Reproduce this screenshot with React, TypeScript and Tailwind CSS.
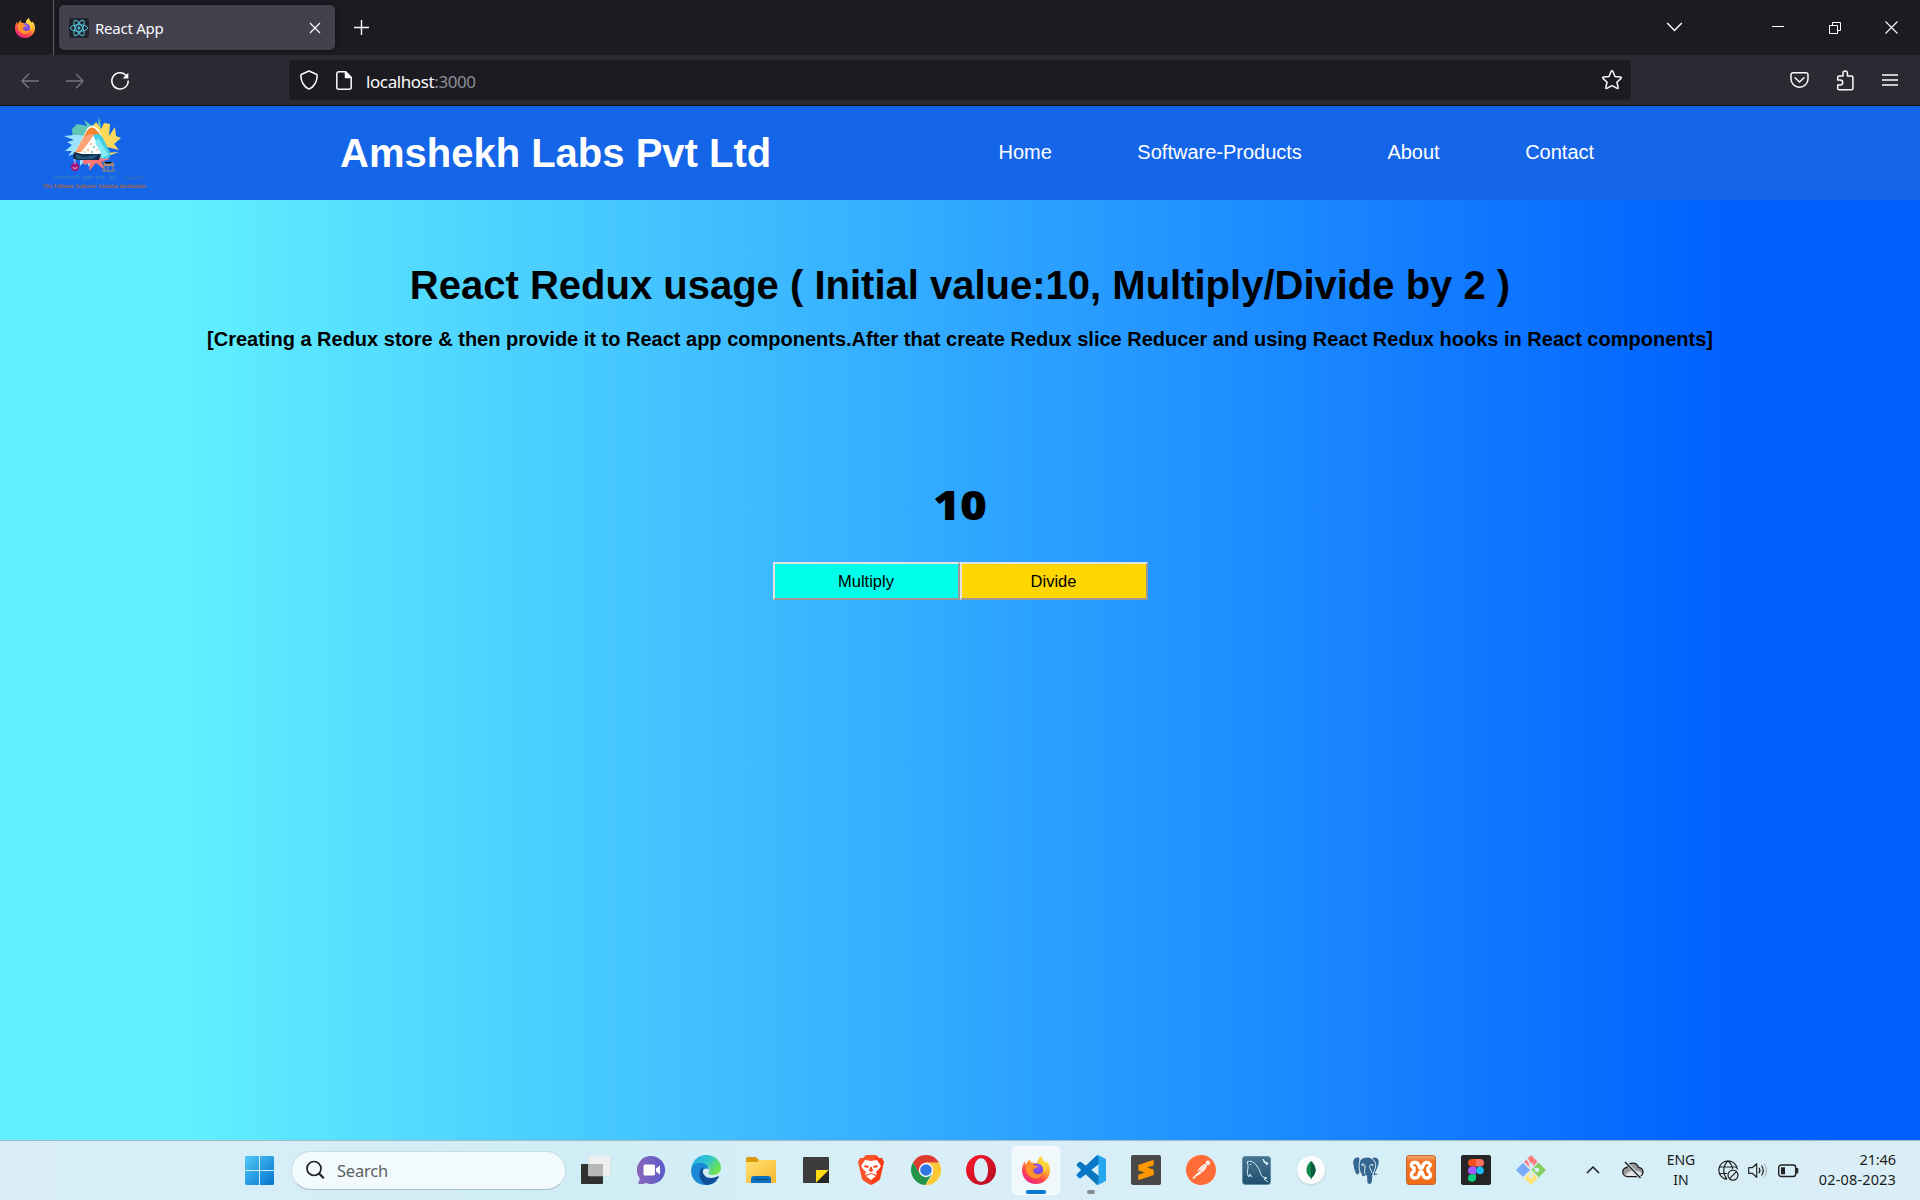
import React from "react";
import { SiPostman, SiSublimetext } from "react-icons/si";

function Firefox({ size }: { size: number }) {
  const id = "ff" + size;
  return (
    <svg width={size} height={size} viewBox="0 0 28 28" className="shrink-0">
      <defs>
        <linearGradient id={id} x1="0.8" y1="0.05" x2="0.2" y2="1">
          <stop offset="0" stopColor="#fff44f" />
          <stop offset=".35" stopColor="#ffa72e" />
          <stop offset=".65" stopColor="#ff4a4b" />
          <stop offset="1" stopColor="#e81f86" />
        </linearGradient>
        <radialGradient id={id + "p"} cx=".6" cy=".3" r=".8">
          <stop offset="0" stopColor="#9059ff" />
          <stop offset="1" stopColor="#5b3ac7" />
        </radialGradient>
      </defs>
      <path d="M3 5c0 2 .2 3 1 4 .8-3 2-4.500 4.200-6-.2 2 .3 3 1.300 3.600 2 0 3.500.2 5.500 1C15 4 16.500 2 19.500 0c.2 3 2 4.500 4 6.500C25 5.800 25 5 25 5c2.500 4 3 7 3 9.500C28 22 22 28 14 28S0 22 0 14.500C0 10.500 1 8 3 5z" fill={`url(#${id})`} />
      <circle cx="14.500" cy="14" r="6.600" fill={`url(#${id}p)`} />
      <path d="M3.500 10.500C6 8 9.500 8 12 9c2 .8 3.800.7 3.800 1.600 0 1.400-3.300 1.200-4.300 3-.8 2 .5 4 3.500 4.600 3 .4 5-1.500 6-2.700-.5 4.500-4 7.500-8 7-5-.6-9-4-9.500-12z" fill="#ff9228" />
      <path d="M17 7.500c3.500 1 5.500 4.500 4.600 9.500 2.500-2 3.300-5.500 1.400-9.500C21 4.500 20 3 19.500 0 16.500 2 15.500 5 17 7.500z" fill="#ffd53d" />
    </svg>
  );
}

function ReactLogo() {
  return (
    <svg width="20" height="20" viewBox="0 0 20 20" className="shrink-0" fill="none" stroke="#58c4dc" strokeWidth="1">
      <rect width="20" height="20" rx="2" fill="#20232a" stroke="none" />
      <ellipse cx="10" cy="10" rx="8.600" ry="3.300" />
      <ellipse cx="10" cy="10" rx="8.600" ry="3.300" transform="rotate(60 10 10)" />
      <ellipse cx="10" cy="10" rx="8.600" ry="3.300" transform="rotate(120 10 10)" />
      <circle cx="10" cy="10" r="1.500" fill="#58c4dc" stroke="none" />
    </svg>
  );
}

function TabStrip() {
  return (
    <div className="flex h-[55px] shrink-0 items-center bg-[#1c1b22]">
      <div className="flex h-full w-[54px] items-center border-r border-[#5b5b66] pl-[15px]">
        <Firefox size={20} />
      </div>
      <div className="ml-[5px] flex h-[45px] w-[276px] items-center rounded-[5px] bg-[#42414d] pl-[10px] pr-[14px] shadow-[0_0_4px_rgba(0,0,0,0.5)]">
        <ReactLogo />
        <span className="ml-[6px] flex-1 pt-[2px] font-['Noto_Sans',sans-serif] text-[15px] tracking-[-0.25px] text-[#fbfbfe]">React App</span>
        <svg width="12" height="12" viewBox="0 0 12 12" stroke="#fbfbfe" strokeWidth="1.200"><path d="M1 1l10 10M11 1L1 11" /></svg>
      </div>
      <svg className="ml-[19px]" width="15" height="15" viewBox="0 0 15 15" stroke="#fbfbfe" strokeWidth="1.400"><path d="M7.500 0v15M0 7.500h15" /></svg>
      <div className="ml-auto flex items-center">
        <svg className="mr-[89px] mt-[-1px]" width="17" height="10" viewBox="0 0 17 10" fill="none" stroke="#fbfbfe" strokeWidth="1.500"><path d="M1.200 1l7.300 7.500L15.800 1" /></svg>
        <svg className="mr-[45px] mt-[-1px]" width="12" height="12" viewBox="0 0 12 12"><path d="M0 5h12v1H0z" fill="#fff" /></svg>
        <svg className="mr-[44px]" width="12" height="12" viewBox="0 0 12 12" fill="none" stroke="#fff"><path d="M.5 3.500h8v8h-8zM3.500 3.500v-3h8v8h-3" /></svg>
        <svg className="mr-[22px]" width="13" height="13" viewBox="0 0 13 13" stroke="#fff" strokeWidth="1.100"><path d="M.5.5l12 12M12.500.5l-12 12" /></svg>
      </div>
    </div>
  );
}

function Toolbar() {
  return (
    <div className="flex h-[51px] shrink-0 items-center border-b border-[#0c0c0d] bg-[#2b2a33]">
      <svg className="ml-[21px] mt-px" width="18" height="16" viewBox="0 0 18 16" fill="none" stroke="#77767f" strokeWidth="1.300"><path d="M18 8H1M8 .8L.9 8 8 15.200" /></svg>
      <svg className="ml-[27px] mt-px" width="18" height="16" viewBox="0 0 18 16" fill="none" stroke="#77767f" strokeWidth="1.300"><path d="M0 8h17M10 .8L17.100 8 10 15.200" /></svg>
      <svg className="ml-[26px] mt-[2px]" width="20" height="20" viewBox="0 0 20 20" fill="none" stroke="#fbfbfe" strokeWidth="1.500"><path d="M16.400 4.700A8.200 8.200 0 1 0 18.200 9.500" /><path d="M18.300 1.700v5.700h-5.700z" fill="#fbfbfe" stroke="none" /></svg>
      <div className="ml-[159px] flex h-10 w-[1342px] items-center rounded-[5px] bg-[#1c1b22] pl-[11px] pr-[8px]">
        <svg width="18" height="20" viewBox="0 0 18 20" fill="none" stroke="#fbfbfe" strokeWidth="1.500" strokeLinejoin="round"><path d="M9 1l7.300 3.200q.9.400.9 1.400C17 11.500 14.500 16.500 9 19.100 3.500 16.500 1 11.500.8 5.600q0-1 .9-1.400z" /></svg>
        <svg className="ml-[18px]" width="16" height="19" viewBox="0 0 16 19" fill="none" stroke="#fbfbfe" strokeWidth="1.500" strokeLinejoin="round"><path d="M2.800.8h6.700l5.700 5.700v9.700a2 2 0 0 1-2 2H2.800a2 2 0 0 1-2-2V2.800a2 2 0 0 1 2-2z" /><path d="M9.500.8v5.700h5.700z" fill="#fbfbfe" /></svg>
        <span className="ml-[14px] flex-1 pt-[3px] font-['Noto_Sans',sans-serif] text-[17px] tracking-[-0.4px] text-[#fbfbfe]">localhost<span className="text-[#8f8e96]">:3000</span></span>
        <svg width="22" height="22" viewBox="0 0 22 22" fill="none" stroke="#fbfbfe" strokeWidth="1.500" strokeLinejoin="round"><path d="M10 2.700q1-2 2 0l2 4.800 5.200.5q1.900.2.600 1.600l-3.900 3.600 1.200 5q.4 1.900-1.400 1L11 16.700 6.300 19.200q-1.800.9-1.400-1l1.200-5L2.200 9.600Q.9 8.200 2.800 8L8 7.500z" /></svg>
      </div>
      <div className="ml-auto mr-[22px] flex items-center">
        <svg width="19" height="16" viewBox="0 0 19 16" fill="none" stroke="#fbfbfe" strokeWidth="1.500" strokeLinecap="round" strokeLinejoin="round"><path d="M3 .8h13a2 2 0 0 1 2 2V7A8.500 8.200 0 0 1 1 7V2.800a2 2 0 0 1 2-2z" /><path d="M5 5.800L9.500 10 14 5.800" /></svg>
        <svg className="ml-[27px]" width="18" height="21" viewBox="0 0 18 21" fill="none" stroke="#fbfbfe" strokeWidth="1.500" strokeLinejoin="round"><path d="M1.700 10V7.500q0-1.500 1.500-1.500H7V3.200a2.200 2.200 0 0 1 4.400 0V6h4q1.500 0 1.500 1.500v11q0 1.300-1.500 1.300H3.200q-1.500 0-1.500-1.300V15h2.500a2.500 2.500 0 0 0 0-5z" /></svg>
        <svg className="ml-[28px]" width="16" height="14" viewBox="0 0 16 14" stroke="#fbfbfe" strokeWidth="1.300"><path d="M0 2h16M0 7h16M0 12h16" /></svg>
      </div>
    </div>
  );
}

function BrandLogo() {
  return (
    <svg className="ml-[34px] shrink-0 overflow-visible" width="121" height="82" viewBox="-8 -3 121 82">
      <g transform="translate(0 3)">
        <path d="M31 22l-1-11 5-5 10 2-3-6 7 5 7-1 1-7 2 9-3 10-18 9z" fill="#62c6b4" />
        <path d="M48 12l6-8 5 7 3-6 6 1-1 12 6-9 1 9 5 2-7 6 5 6-16-4-10-12z" fill="#ffd95a" />
        <path d="M38 17l-6 0-10 1 10 4-7 2 5 3-7 6 7 0-4 5 9-3-4 8 7-5 0 10 6-6 3 7 4-10 1-18z" fill="#9de3fa" />
        <path d="M40 40l2 7 6-2-1 8 7-8 10 8-5-9 9-3-10-6-18-1z" fill="#ff7474" />
        <path d="M64 35l13-1-8 3z" fill="#ffd95a" />
        <path d="M50 8q6 0 9 9L68 39H32l1-4 11-22q2-5 6-5z" fill="#fff" />
        <path d="M45 13q5-8 12 2l2 3-8-1-9 16-9 2z" fill="#fa822c" />
        <path d="M51 18L42 32l-8 2 6-12q4-6 11-6z" fill="#ffa477" />
        <path d="M52 17q5-3 9 3l7 14q2 6-5 7l-5-1q1-8-7-23z" fill="#42cde0" />
        <path d="M56 20l11 17-7 3-7-16z" fill="#84e8f5" />
        <path d="M50 20l9 15-21 1z" fill="#fff" />
        <g fill="#ff965e"><circle cx="49" cy="26" r=".9" /><circle cx="46" cy="32" r="1" /><circle cx="55" cy="32" r=".8" /></g>
        <g fill="#59bea8"><circle cx="52" cy="29" r=".9" /><circle cx="50" cy="34" r=".9" /><circle cx="43" cy="34" r=".8" /></g>
        <path d="M32 34l8 2h19l-2 6H35q-6 0-3-8z" fill="#102c4e" />
        <path d="M33 36l9 3 15-3-6 5H35z" fill="#225978" />
        <circle cx="33" cy="49" r="4.200" fill="#a3157d" />
        <path d="M31 49q2 3 4 0M33 41v5" stroke="#d5b1db" strokeWidth="1.200" fill="none" />
        <path d="M62 44v9m4-8v8m5-8v8M60 44l6 3 6-3M60 53h13" stroke="#817f82" strokeWidth="1.300" />
        <path d="M62 47h10" stroke="#f29b61" strokeWidth="1.200" />
      </g>
      <text x="12" y="64" fontSize="7" fill="#4486b4" fontFamily="Liberation Serif" fontStyle="italic" textLength="62" lengthAdjust="spacingAndGlyphs">Amshekh labs pvt. ltd</text>
      <text x="76" y="60" fontSize="3.500" fill="#765f73" fontFamily="Liberation Sans">™</text>
      <text x="82" y="64" fontSize="3.500" fill="#586f96" fontFamily="Liberation Sans" textLength="20" lengthAdjust="spacingAndGlyphs">©copyright 2023</text>
      <text x="1" y="73" fontSize="7" fill="#a9643f" fontFamily="Liberation Serif" fontStyle="italic" fontWeight="bold" textLength="103" lengthAdjust="spacingAndGlyphs">The Ultimate Software Solution destination</text>
    </svg>
  );
}

function SiteHeader() {
  return (
    <header className="flex h-[94px] shrink-0 items-center bg-[#1565e8] font-['Liberation_Sans',sans-serif] text-white">
      <BrandLogo />
      <h1 className="ml-[185px] w-[432px] whitespace-nowrap text-[40px] font-bold leading-none">Amshekh Labs Pvt Ltd</h1>
      <nav className="-mt-[2px] ml-[226.500px] flex gap-[85.500px] text-[20px] leading-none">
        <span>Home</span>
        <span>Software-Products</span>
        <span>About</span>
        <span>Contact</span>
      </nav>
    </header>
  );
}

function Counter() {
  return (
    <main className="flex flex-1 flex-col items-center bg-[linear-gradient(90deg,#60efff_10%,#0061ff_90%)] pt-[62px] font-['Liberation_Sans',sans-serif] text-black">
      <h1 className="whitespace-nowrap text-[40px] font-bold leading-[46px]">React Redux usage ( Initial value:10, Multiply/Divide by 2 )</h1>
      <h2 className="mt-[19px] whitespace-nowrap text-[20px] font-bold leading-[24px]">[Creating a Redux store &amp; then provide it to React app components.After that create Redux slice Reducer and using React Redux hooks in React components]</h2>
      <div className="mt-[129px] scale-x-[1.12] font-['Open_Sans',sans-serif] text-[41px] font-extrabold leading-[48px]">10</div>
      <div className="mt-[34px] flex">
        <button className="h-[38px] w-[187px] border-2 border-b-[#999] border-l-[#e3e3e3] border-r-[#999] border-t-[#e3e3e3] bg-[#00ffe8] pt-px text-[16.500px]">Multiply</button>
        <button className="h-[38px] w-[188px] border-2 border-b-[#999] border-l-[#e3e3e3] border-r-[#999] border-t-[#e3e3e3] bg-[#ffd700] pt-px text-[16.500px]">Divide</button>
      </div>
    </main>
  );
}

function Slot({ children, active, dot }: { children: React.ReactNode; active?: boolean; dot?: boolean }) {
  return (
    <div className={active ? "relative flex h-[49px] w-12 items-center justify-center rounded-[5px] border border-white/80 bg-[#f0f8fc]" : "relative flex h-[49px] w-12 items-center justify-center"}>
      {children}
      {active && <span className="absolute bottom-0 h-1 w-5 rounded-full bg-[#0078d4]" />}
      {dot && <span className="absolute bottom-[1px] h-1 w-2 rounded-full bg-[#858b8f]" />}
    </div>
  );
}

function TaskApps() {
  return (
    <div className="-mt-px ml-[6px] flex gap-[7px]">
      <Slot>
        <svg width="30" height="28" viewBox="0 0 30 28"><rect y="8" width="22" height="20" rx="1" fill="#30302f" /><rect x="7.500" width="22" height="20" rx="1" fill="#efefef" stroke="#d3d6d9" strokeWidth=".5" /><path d="M7.500 8H22v12H7.500z" fill="#b7b7b7" /></svg>
      </Slot>
      <Slot>
        <svg width="29" height="28" viewBox="0 0 29 28"><defs><linearGradient id="chat" x1="0" x2="1"><stop stopColor="#8b66ba" /><stop offset="1" stopColor="#5a5ccb" /></linearGradient></defs><path d="M15 0a14 14 0 1 1-6 27q-3 1.500-8 .8 1.500-2 1.700-5.500A14 14 0 0 1 15 0z" fill="url(#chat)" /><rect x="6.500" y="8.500" width="11.500" height="11" rx="1.500" fill="#fff" /><path d="M19 12.500l4-3v9l-4-3z" fill="#fff" /></svg>
      </Slot>
      <Slot>
        <svg width="30" height="30" viewBox="0 0 30 30"><defs><linearGradient id="edg" x1="0" x2="1" y2=".5"><stop stopColor="#28a9e8" /><stop offset=".55" stopColor="#2fc6d1" /><stop offset="1" stopColor="#70e250" /></linearGradient></defs><path d="M.5 12C2 4.500 8 0 15 0c9 0 15 6 15 12.800 0 4.500-3.500 7.200-8 7.200-4 0-5.500-1.500-4.200-3 2-2.500.6-6-4.300-6C8 11 4 15 4 19z" fill="url(#edg)" /><path d="M0 15C1 10 5 7.500 10 8c5 .4 8 4 8 7-1.500-2.500-6-2-6.500 2.500C11 25 20 29 27 25c-3 3-7 5-12 5C6 30 0 24 0 15z" fill="#1a88d5" /><path d="M8.500 18.500q-.3-5 4-6.300C10 18 14 23 20 23q3.500 0 7-1.800c1-.3 1.200.5.6 1.400C25 27 20 30 15.500 30 11 28.500 8.500 24 8.500 18.500z" fill="#104f98" /></svg>
      </Slot>
      <Slot>
        <svg width="30" height="27" viewBox="0 0 30 27"><defs><linearGradient id="fold" y2="1" x2="1"><stop stopColor="#ffdf72" /><stop offset="1" stopColor="#f8b92c" /></linearGradient></defs><path d="M0 2q0-2 2-2h8l3 3h15q2 0 2 2v5H0z" fill="#d99a0c" /><path d="M0 5h11l2-2h17v23H0z" fill="url(#fold)" /><path d="M5 26v-4q0-3 3-3h14q3 0 3 3v4z" fill="#0b70bd" /><path d="M9 22.500h12" stroke="#0a4c86" strokeWidth="1.200" /></svg>
      </Slot>
      <Slot>
        <svg width="26" height="26" viewBox="0 0 26 26"><rect width="26" height="26" rx="1" fill="#3c3c3c" /><path d="M13 13h13L13 26z" fill="#ffdc12" /><path d="M26 13v13H13z" fill="#242424" /></svg>
      </Slot>
      <Slot>
        <svg width="26" height="30" viewBox="0 0 26 30"><path d="M8 0h10l3 3 3 0 2 4-1 4-3 13q-1 2-9 6-8-4-9-6L1 11 0 7l2-4h3z" fill="#fb542b" /><path d="M18 0l3 3h3l2 4-1 4-3 13q-1 2-9 6z" fill="#ff2b08" opacity=".6" /><path d="M7 5l6 1 6-1 4 6-2 3-3 3 1 3-6-2-6 2 1-3-3-3-2-3z M8 21l5-2 5 2-5 4z" fill="#fff" /><path d="M7 10l4 1-1 2-4-1zM19 10l-4 1 1 2 4-1zM12 12h2l1 4-2 1-2-1z" fill="#fb4a24" /></svg>
      </Slot>
      <Slot>
        <svg width="30" height="30" viewBox="0 0 30 30"><path d="M15 15l7 4-8 11A15 15 0 0 0 28 7.500H15z" fill="#fcc934" /><path d="M2 7.500a15 15 0 0 1 26 0H15L8.500 19z" fill="#df3c30" /><path d="M2 7.500A15 15 0 0 0 14 30l7-11-12 0z" fill="#23954b" /><circle cx="15" cy="15" r="7.200" fill="#fff" /><circle cx="15" cy="15" r="5.800" fill="#3178e6" /></svg>
      </Slot>
      <Slot>
        <svg width="30" height="30" viewBox="0 0 30 30"><defs><linearGradient id="op" y2="1"><stop stopColor="#ff1b2d" /><stop offset="1" stopColor="#b00b20" /></linearGradient></defs><path fillRule="evenodd" d="M15 0a15 15 0 1 1 0 30 15 15 0 0 1 0-30zm0 3.200C11 3.200 8 8 8 15s3 11.800 7 11.800S22 22 22 15 19 3.200 15 3.200z" fill="url(#op)" /></svg>
      </Slot>
      <Slot active><Firefox size={28} /></Slot>
      <Slot dot>
        <svg width="30" height="30" viewBox="0 0 30 30"><path d="M1 9l2-2q1-.5 2 0l18 14v8q-2 1-3 0L1 11q-1-1 0-2z" fill="#0a78be" /><path d="M1 21l2 2q1 .5 2 0L23 9V1q-2-1-3 0L1 19q-1 1 0 2z" fill="#0877c9" /><path d="M22 0l7 3.500q1 .5 1 1.500v20q0 1-1 1.500L22 30q-1 0-2-1 2 .5 2.500-1.500v-25Q22 .5 20 1q1-1 2-1z" fill="#25a6ee" /></svg>
      </Slot>
      <Slot>
        <span className="flex h-[30px] w-[30px] items-center justify-center rounded-[2px] bg-[#484848]"><SiSublimetext size={20} color="#ff9800" /></span>
      </Slot>
      <Slot>
        <span className="flex rounded-full bg-white"><SiPostman size={30} color="#ff6c37" /></span>
      </Slot>
      <Slot>
        <span className="flex h-[29px] w-[29px] items-center justify-center rounded-[3px] border border-[#5d91a6] bg-[linear-gradient(#477390,#20506f)]">
          <svg width="25" height="25" viewBox="0 0 25 25" fill="none" stroke="#d5eaf2" strokeWidth="1"><path d="M8 19l-2-3-1 3C1 14 6 10 3 4c3-2 7 0 10 4 4 5 3 9 6 11l4 1-3 1 4 3M6 6l1 1" /><path d="M19 1l1 3 3 3 1-2-3-1z" fill="#d5eaf2" /></svg>
        </span>
      </Slot>
      <Slot>
        <span className="flex h-7 w-7 items-center justify-center rounded-full bg-[#fbfbfb] shadow-sm">
          <svg width="10" height="19" viewBox="0 0 10 19"><path d="M5 0C0 5-2 11 4.600 17l.4 2 .4-2C12 11 10 5 5 0z" fill="#10874f" /><path d="M5 0v19l.4-2C12 11 10 5 5 0z" fill="#0b5a3c" /></svg>
        </span>
      </Slot>
      <Slot>
        <svg width="28" height="29" viewBox="0 0 28 29" fill="#336791" stroke="#eef8fb" strokeWidth=".9" strokeLinejoin="round">
          <path d="M7 1C2 .5 0 4 1 9c.7 5 3 11 5 10l3-4M20 1.500C25 0 28 3 27 8c-.6 3-2.500 7-4 9 2 .5 3.500.5 4 .3-1 2-4 2.700-6 2.200z" />
          <path d="M9 3c4-3 11-3 14 3 2 4-1 9-2 12-.5 3 .2 7-1.500 9.500-1.500 1.500-4 1-4.500-1-.5-2.500-.2-5-.6-7-1.500.8-4 1.500-6.400.8 2-.6 2.500-1.300 1-2.800C7 16 6 6 9 3z" />
          <path d="M9 9c2-2 4-1 4 2s-1 4 0 7M21 9c-3-1-4 1-3 3l2 5" fill="none" />
          <circle cx="10.800" cy="9.200" r=".8" fill="#fff" stroke="none" /><circle cx="20.500" cy="9" r=".7" fill="#fff" stroke="none" />
        </svg>
      </Slot>
      <Slot>
        <span className="flex h-[30px] w-[30px] items-center justify-center rounded-[3px] border border-[#c16a2c] bg-[linear-gradient(#f5a368,#f17422_20%,#ef6d18)]">
          <svg width="24" height="20" viewBox="0 0 24 20" fill="none" stroke="#fff" strokeWidth="3.400" strokeLinejoin="round" strokeLinecap="round"><path d="M5 8Q2 7 2.500 4.500T7 2.500q2 .5 3 3l1 2.500h2l1-2.500q1-2.500 3-3 3-.5 4 1.500T19 8M5 11q-3 2-2.500 4.500T6 18q3 0 4-3l1-3h2l1 3q1 3 4 3 3-.5 3.500-2.500T19 11M5 8v3M19 8v3" /></svg>
        </span>
      </Slot>
      <Slot>
        <span className="flex h-[30px] w-[30px] items-center justify-center rounded-[2px] bg-[#252525]">
          <svg width="16" height="23" viewBox="0 0 16 23"><path d="M8 0H4a4 3.800 0 0 0 0 7.600h4z" fill="#f24e1e" /><path d="M8 0h4a4 3.800 0 0 1 0 7.600H8z" fill="#ff7262" /><path d="M8 7.600H4a4 3.800 0 0 0 0 7.600h4z" fill="#a259ff" /><circle cx="12" cy="11.400" r="3.800" fill="#1abcfe" /><path d="M8 15.200H4a4 3.800 0 1 0 4 3.800z" fill="#0acf83" /></svg>
        </span>
      </Slot>
      <Slot>
        <svg width="30" height="30" viewBox="0 0 30 30"><path d="M15 0l6.500 6.500L15 14 8 7z" fill="#ff7d7e" /><path d="M7.500 7.500L15 15l-7.500 7.500L0 15z" fill="#79aafa" /><path d="M22.500 7.500L30 15l-7.500 7.500L15 15z" fill="#86cf5e" /><path d="M15 15l7 8-7 7-7-7z" fill="#ffe477" /><path d="M11 4l4 6v11M15 11l6 4M7.500 7.500L15 15l-7.500 7.500M15 15l7 7.500" stroke="#d9eff7" strokeWidth="1.500" fill="none" /><g fill="#d9eff7"><circle cx="15" cy="10" r="2.200" /><circle cx="21" cy="15" r="2.200" /><circle cx="15" cy="21" r="2.200" /></g></svg>
      </Slot>
    </div>
  );
}

function Tray() {
  return (
    <div className="ml-auto mr-6 flex items-center font-['Noto_Sans',sans-serif] text-[14px] text-[#1c1c1c]">
      <svg className="mr-[22px] mt-[-2px]" width="14" height="9" viewBox="0 0 14 9" fill="none" stroke="#191919" strokeWidth="1.500"><path d="M1 8l6-6 6 6" /></svg>
      <svg className="mr-[22px] mt-[-2px]" width="22" height="18" viewBox="0 0 22 18"><path d="M5.500 15.500a4.500 4.500 0 0 1-.5-9 6 6 0 0 1 11.500 0 4.500 4.500 0 0 1 0 9z" fill="#999" stroke="#1b1b1b" strokeWidth="1.300" /><path d="M3 14q6-6 11-4 5 0 6 3-1 2-4 2H6z" fill="#e2e2e2" /><path d="M3.500 1l15 16" stroke="#d9eff7" strokeWidth="3" /><path d="M3 1l15.500 16" stroke="#1b1b1b" strokeWidth="1.400" /></svg>
      <div className="-mt-px mr-[22px] w-[30px] text-center leading-5">ENG<br />IN</div>
      <svg className="mr-[9px]" width="21" height="21" viewBox="0 0 21 21" fill="none" stroke="#222" strokeWidth="1.200"><path d="M9 19.400a9.300 9.300 0 1 1 10.400-9.900M1.200 7h17M1.200 13.500h8M9 19.400C4.500 14 4.500 6 10 .8c3 2.500 4 5 4.500 8" /><circle cx="15" cy="15.200" r="5" /><path d="M11.500 18.700l7-7" /></svg>
      <svg className="mr-[10px]" width="20" height="17" viewBox="0 0 20 17" fill="none" stroke="#222" strokeWidth="1.200"><path d="M.7 5.700v5.600h3.500l4.500 4V1.700l-4.500 4z" strokeLinejoin="round" /><path d="M11 5.700q1.800 2.800 0 5.600M13.500 3.500q3.500 5 0 10" /><path d="M16 1.500q5 7 0 14" stroke="#a9b4b8" /></svg>
      <svg className="mr-[18px]" width="21" height="14" viewBox="0 0 21 14"><rect x=".7" y="1" width="17" height="11.500" rx="2.500" fill="none" stroke="#222" strokeWidth="1.400" /><rect x="3" y="3.300" width="4" height="7" fill="#222" /><path d="M18.300 4.500h1.500v4.500h-1.500z" fill="#222" stroke="#222" /></svg>
      <div className="-mt-[3px] w-[79px] whitespace-nowrap text-right text-[14.500px] leading-5 tracking-[0.150px]"><span className="tracking-[-0.1px]">21:46</span><br />02-08-2023</div>
    </div>
  );
}

function Taskbar() {
  return (
    <footer className="flex h-[60px] shrink-0 items-center border-t border-[#a5b7c6] bg-[linear-gradient(90deg,#d9eef8,#d0edf5_30%,#daeef8_50%,#d4eff7_75%,#daeef6)]">
      <svg className="ml-[245px]" width="29" height="29" viewBox="0 0 29 29"><defs><linearGradient id="win" x2="1" y2="1"><stop stopColor="#4fc8f5" /><stop offset="1" stopColor="#0673cf" /></linearGradient></defs><path d="M1 0h13v14H0V1zM15 0h13l1 1v13H15zM0 15h14v14H1l-1-1zM15 15h14v13l-1 1H15z" fill="url(#win)" /></svg>
      <div className="-mt-px ml-[17px] flex h-[39px] w-[275px] items-center rounded-full border border-[#c5dce6] border-b-[#a6bdc9] bg-[#f3fafd] pl-[13px]">
        <svg width="20" height="20" viewBox="0 0 20 20" fill="none" stroke="#222" strokeWidth="1.700"><circle cx="9" cy="8.500" r="7" /><path d="M13.800 13.300l5 5" strokeWidth="2.200" /></svg>
        <span className="ml-[12px] pt-[2px] font-['Noto_Sans',sans-serif] text-[16.500px] tracking-[-0.2px] text-[#5b6063]">Search</span>
      </div>
      <TaskApps />
      <Tray />
    </footer>
  );
}

export default function App() {
  return (
    <div className="flex h-[1200px] w-[1920px] flex-col overflow-hidden">
      <TabStrip />
      <Toolbar />
      <SiteHeader />
      <Counter />
      <Taskbar />
    </div>
  );
}
